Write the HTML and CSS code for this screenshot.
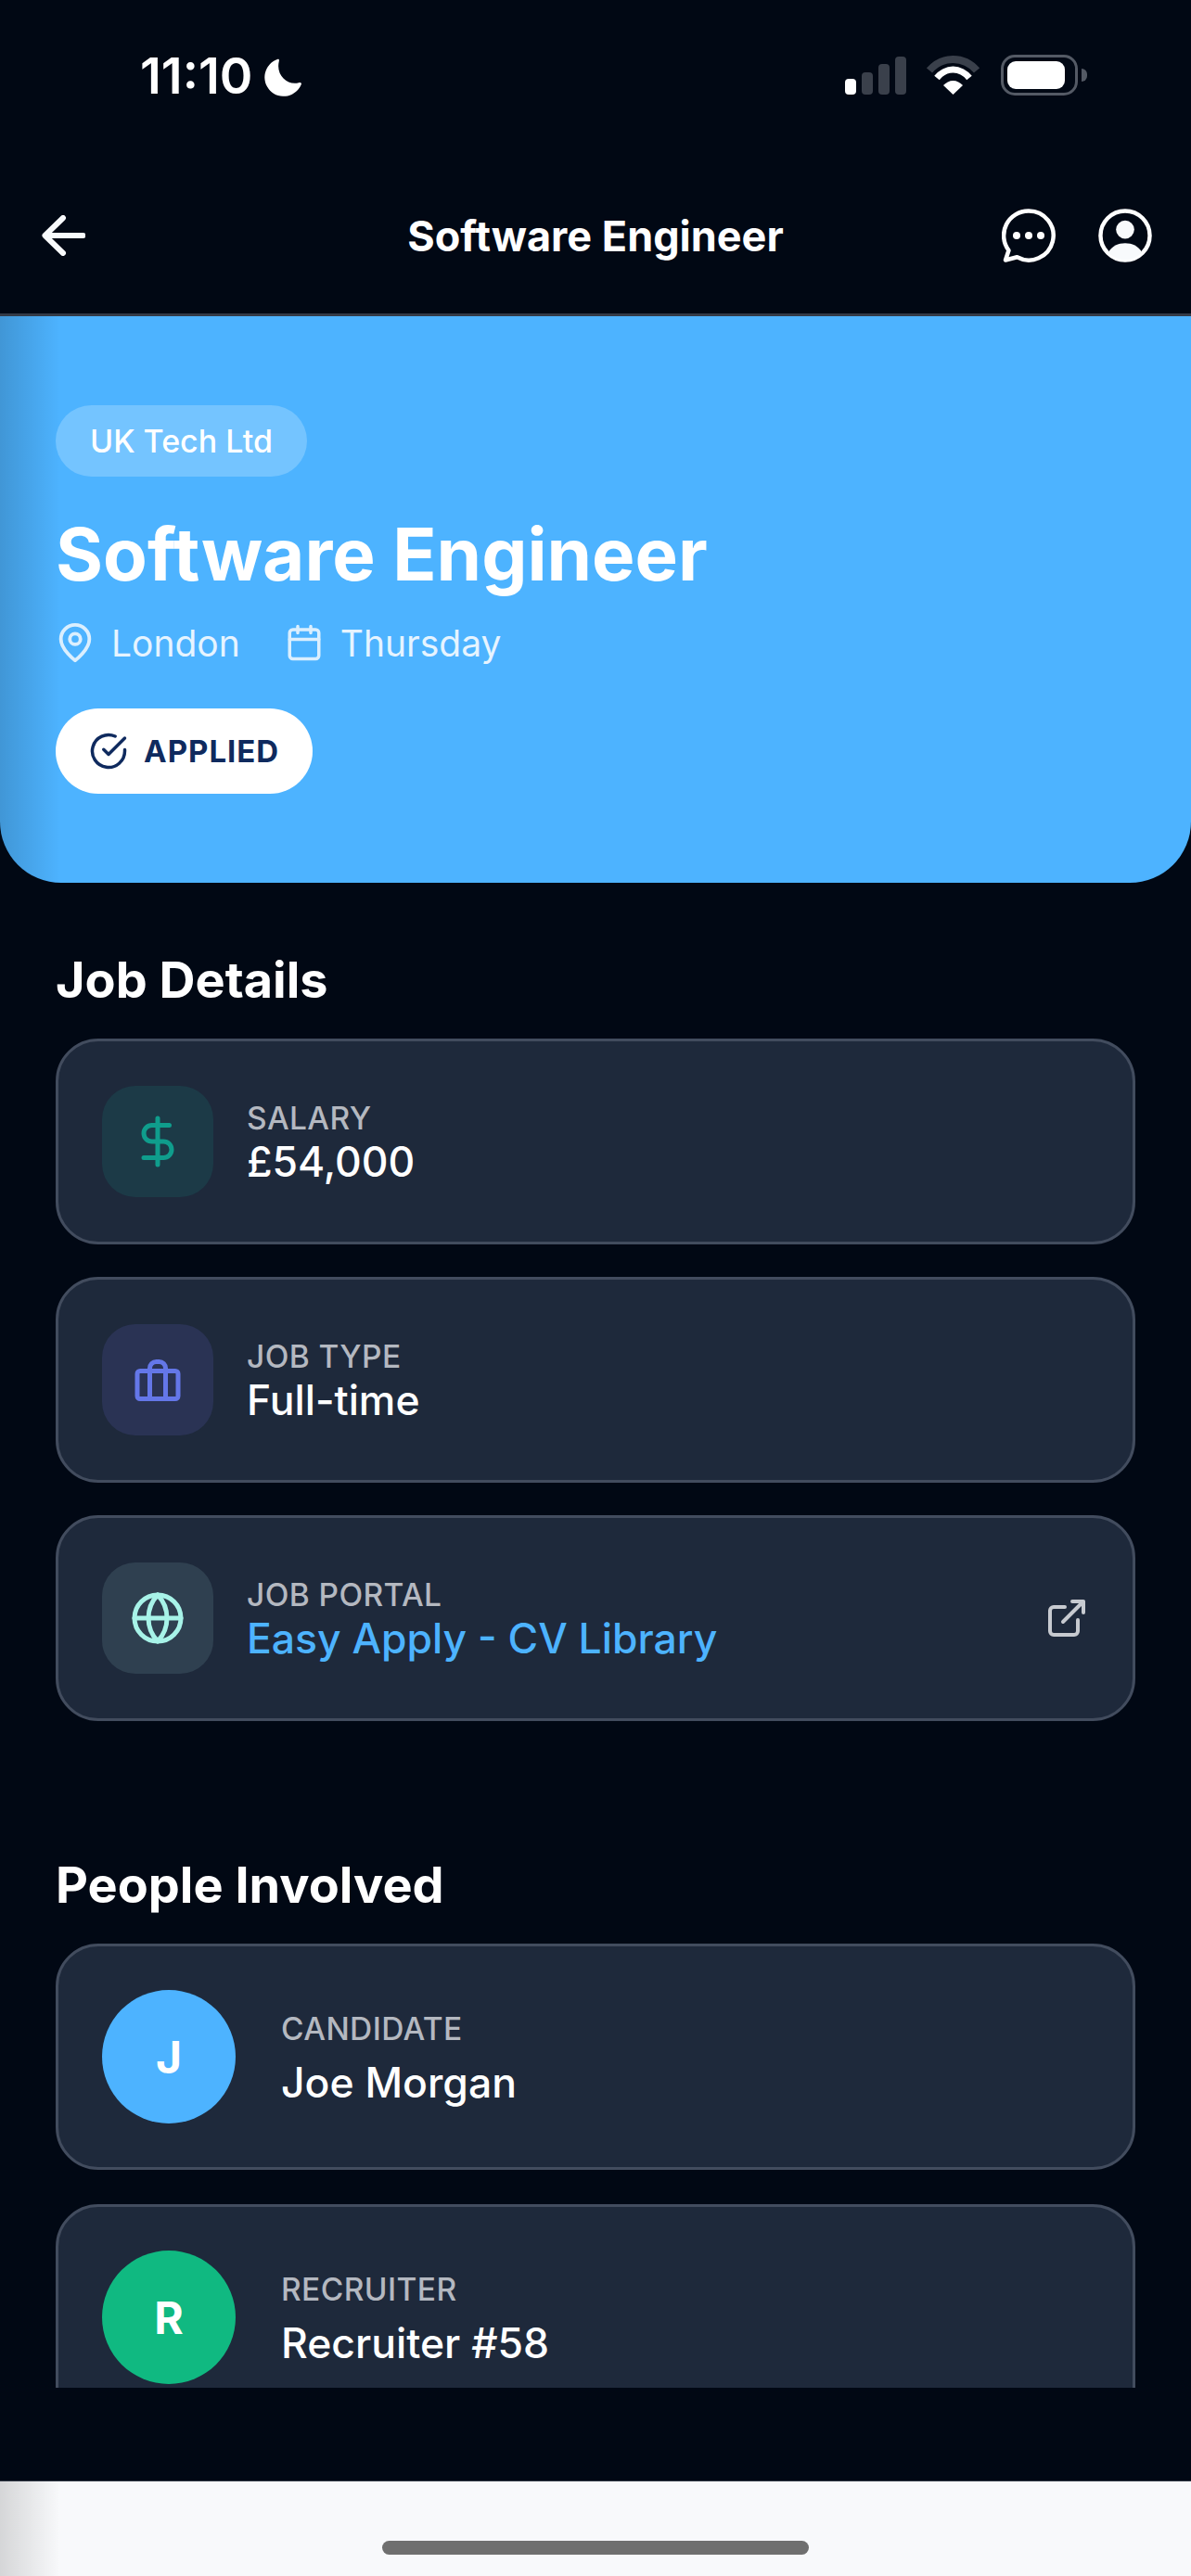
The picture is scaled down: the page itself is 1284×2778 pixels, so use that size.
FILE: index.html
```html
<!DOCTYPE html>
<html>
<head>
  <title>Software Engineer</title>
  <link rel="stylesheet" href="styles.css">
</head>
<body>
  <div class="app">
    <div class="status-bar">
      <div class="status-time">
        <span>11:10</span>
        <svg class="moon" viewBox="0 0 42 42"><path d="M15 1A20.500 20.500 0 1 0 41 27.500C40.500 26 39.500 25.800 38 26.300 26 29.500 13 18 16.800 3 17.200 1 16.500 .5 15 1z" fill="#fff"/></svg>
      </div>
      <div class="status-icons">
        <div class="signal">
          <span class="bar bar-on bar-1"></span>
          <span class="bar bar-2"></span>
          <span class="bar bar-3"></span>
          <span class="bar bar-4"></span>
        </div>
        <svg class="wifi" viewBox="0 0 57 42">
          <path d="M3 16C9 9 18 4 28.500 4S48 9 54 16" fill="none" stroke="#3a404b" stroke-width="8"/>
          <path d="M11 24c4-5 11-9 17.500-9S42 19 46 24" fill="none" stroke="#fff" stroke-width="7"/>
          <path d="M18 32c3-3 6.500-5 10.500-5s7.500 2 10.500 5L28.500 42z" fill="#fff"/>
        </svg>
        <div class="battery">
          <div class="battery-fill"></div>
        </div>
        <span class="battery-nub"></span>
      </div>
    </div>

    <header class="top-bar">
      <svg class="back-icon" viewBox="0 0 47 44"><path d="M23 3 3.500 22 23 41M4 22h40.500" fill="none" stroke="#f8fafc" stroke-width="6" stroke-linecap="round" stroke-linejoin="round"/></svg>
      <h1 class="top-title">Software Engineer</h1>
      <div class="top-actions">
        <svg class="top-icon" viewBox="0 0 58 58">
          <path d="M29 2.500a26.500 26.500 0 1 1-12.500 49.800L4 55.500l3.500-10.500A26.500 26.500 0 0 1 29 2.500z" fill="none" stroke="#fff" stroke-width="4.500" stroke-linejoin="round"/>
          <circle cx="16" cy="29" r="4" fill="#fff"/>
          <circle cx="29" cy="29" r="4" fill="#fff"/>
          <circle cx="42" cy="29" r="4" fill="#fff"/>
        </svg>
        <svg class="top-icon" viewBox="0 0 59 59">
          <circle cx="29.500" cy="29.500" r="27" fill="none" stroke="#fff" stroke-width="4.500"/>
          <circle cx="29.500" cy="23" r="10" fill="#f8fafc"/>
          <path d="M11 48c4-7 11-10 18.500-10S44 41 48 48c-5 5-11 8-18.500 8S16 53 11 48z" fill="#f8fafc"/>
        </svg>
      </div>
    </header>

    <main class="content">
      <section class="hero">
        <span class="company-chip">UK Tech Ltd</span>
        <h2 class="hero-title">Software Engineer</h2>
        <div class="hero-meta">
          <div class="meta-item">
            <svg class="meta-icon meta-pin" viewBox="0 0 24 24"><path d="M20 10c0 6-8 12-8 12s-8-6-8-12a8 8 0 0 1 16 0z"/><circle cx="12" cy="10" r="3"/></svg>
            <span>London</span>
          </div>
          <div class="meta-item">
            <svg class="meta-icon" viewBox="0 0 24 24"><rect x="3" y="4" width="18" height="18" rx="2"/><path d="M16 2v4M8 2v4M3 10h18"/></svg>
            <span>Thursday</span>
          </div>
        </div>
        <div class="status-pill">
          <svg class="pill-icon" viewBox="0 0 24 24"><path d="M22 11.080V12a10 10 0 1 1-5.930-9.140"/><path d="M22 4 12 14.010l-3-3"/></svg>
          <span>APPLIED</span>
        </div>
      </section>

      <section class="section">
        <h3 class="section-title">Job Details</h3>
        <div class="card-list">
          <div class="card">
            <div class="card-icon icon-green">
              <svg viewBox="0 0 24 24"><path d="M12 2v20M17 5H9.500a3.500 3.500 0 0 0 0 7h5a3.500 3.500 0 0 1 0 7H6"/></svg>
            </div>
            <div class="card-text">
              <div class="card-label">SALARY</div>
              <div class="card-value">£54,000</div>
            </div>
          </div>
          <div class="card">
            <div class="card-icon icon-indigo">
              <svg viewBox="0 0 24 24"><rect x="3.200" y="8.200" width="17.600" height="12" rx="1.200"/><path d="M15.400 20V7a2.800 2.800 0 0 0-2.800-2.800h-1.200A2.800 2.800 0 0 0 8.600 7v13"/></svg>
            </div>
            <div class="card-text">
              <div class="card-label">JOB TYPE</div>
              <div class="card-value">Full-time</div>
            </div>
          </div>
          <div class="card">
            <div class="card-icon icon-mint">
              <svg viewBox="0 0 24 24"><circle cx="12" cy="12" r="10"/><path d="M12 2a14.500 14.500 0 0 0 0 20 14.500 14.500 0 0 0 0-20M2 12h20"/></svg>
            </div>
            <div class="card-text">
              <div class="card-label">JOB PORTAL</div>
              <div class="card-value card-link">Easy Apply - CV Library</div>
            </div>
            <svg class="external-icon" viewBox="0 0 24 24"><path d="M18 13v6a2 2 0 0 1-2 2H5a2 2 0 0 1-2-2V8a2 2 0 0 1 2-2h6M15 3h6v6M10 14 21 3"/></svg>
          </div>
        </div>
      </section>

      <section class="section section-people">
        <h3 class="section-title">People Involved</h3>
        <div class="card-list people-list">
          <div class="card person-card">
            <div class="avatar avatar-blue">J</div>
            <div class="card-text">
              <div class="card-label">CANDIDATE</div>
              <div class="card-value person-name">Joe Morgan</div>
            </div>
          </div>
          <div class="card person-card">
            <div class="avatar avatar-green">R</div>
            <div class="card-text">
              <div class="card-label">RECRUITER</div>
              <div class="card-value person-name">Recruiter #58</div>
            </div>
          </div>
        </div>
      </section>
    </main>

    <footer class="home-area">
      <div class="home-bar"></div>
    </footer>
  </div>
</body>
</html>
```

FILE: styles.css
```css
/* page frame */
* {
  box-sizing: border-box;
}

html, body {
  margin: 0;
  padding: 0;
  background-color: #010814;
}

body {
  width: 1284px;
  height: 2778px;
  overflow: hidden;
  font-family: Inter, "Noto Sans", sans-serif;
  color: #fff;
}

.app {
  height: 2778px;
  display: flex;
  flex-direction: column;
}

/* status bar */
.status-bar {
  height: 116px;
  padding: 59px 112px 0 151px;
  display: flex;
  justify-content: space-between;
  align-items: flex-start;
}

.status-time {
  display: flex;
  align-items: center;
  gap: 12px;
  font-size: 54px;
  font-weight: 600;
  line-height: 46px;
}

.moon {
  width: 42px;
  height: 42px;
  margin-top: 4px;
}

.status-icons {
  display: flex;
  align-items: center;
  height: 44px;
}

.signal {
  display: flex;
  align-items: flex-end;
  gap: 6px;
  height: 41px;
  margin-right: 22px;
}

.bar {
  width: 12px;
  border-radius: 4px;
  background-color: #3a404b;
}

.bar-on {
  background-color: #fff;
}

.bar-1 {
  height: 17px;
}

.bar-2 {
  height: 24px;
}

.bar-3 {
  height: 33px;
}

.bar-4 {
  height: 41px;
}

.wifi {
  width: 57px;
  height: 42px;
  margin-right: 23px;
}

.battery {
  width: 83px;
  height: 44px;
  padding: 4px;
  border: 3px solid #545a65;
  border-radius: 15px;
}

.battery-fill {
  width: 62px;
  height: 30px;
  background-color: #fff;
  border-radius: 9px;
}

.battery-nub {
  width: 6px;
  height: 14px;
  margin-left: 4px;
  background-color: #545a65;
  border-radius: 0 7px 7px 0;
}

/* top bar */
.top-bar {
  height: 225px;
  padding: 110px 42px 0 45px;
  display: flex;
  justify-content: space-between;
  align-items: flex-start;
  position: relative;
  border-bottom: 3px solid #333a47;
}

.back-icon {
  width: 47px;
  height: 44px;
  margin-top: 6px;
}

.top-title {
  margin: 0;
  position: absolute;
  left: 0;
  right: 0;
  top: 112px;
  text-align: center;
  font-size: 45px;
  font-weight: 700;
  line-height: 54px;
}

.top-actions {
  display: flex;
  gap: 46px;
  margin-top: -1px;
}

.top-icon {
  width: 58px;
  height: 58px;
}

/* scrolling part */
.content {
  height: 2234px;
  flex: none;
  overflow: hidden;
}

.hero {
  height: 611px;
  padding: 96px 60px 0;
  background-color: #4db3ff;
  background-image: linear-gradient(90deg, rgba(0, 0, 0, 0.16), rgba(0, 0, 0, 0) 65px);
  border-radius: 0 0 66px 66px;
}

.company-chip {
  display: inline-block;
  height: 77px;
  padding: 0 37px 0 37px;
  line-height: 77px;
  font-size: 34px;
  font-weight: 500;
  background-color: #74c4ff;
  border-radius: 39px;
  vertical-align: top;
}

.hero-title {
  margin: 38px 0 0;
  font-size: 78px;
  font-weight: 700;
  line-height: 92px;
}

.hero-meta {
  display: flex;
  gap: 48px;
  margin-top: 26px;
  height: 46px;
  align-items: center;
  color: #e6f4ff;
  font-size: 39px;
}

.meta-item {
  display: flex;
  align-items: center;
  gap: 18px;
}

.meta-icon {
  width: 42px;
  height: 42px;
  fill: none;
  stroke: #dbeffe;
  stroke-width: 2;
  stroke-linecap: round;
  stroke-linejoin: round;
}

.meta-pin {
  width: 46px;
  height: 46px;
  margin: 0 -2px;
}

.status-pill {
  display: inline-flex;
  align-items: center;
  gap: 17px;
  height: 92px;
  margin-top: 48px;
  padding: 0 36px;
  background-color: #fff;
  border-radius: 46px;
  color: #0f2a5e;
  font-size: 33px;
  font-weight: 700;
  letter-spacing: 1px;
}

.pill-icon {
  width: 42px;
  height: 42px;
  fill: none;
  stroke: #0f2a5e;
  stroke-width: 2;
  stroke-linecap: round;
  stroke-linejoin: round;
}

/* sections */
.section {
  padding: 0 60px;
}

.section-title {
  margin: 0;
  padding-top: 73px;
  height: 168px;
  font-size: 54px;
  font-weight: 700;
  line-height: 64px;
}

.section-people {
  margin-top: 72px;
}

.card-list {
  display: flex;
  flex-direction: column;
  gap: 35px;
}

.people-list {
  gap: 37px;
}

.card {
  display: flex;
  align-items: center;
  height: 222px;
  padding: 0 47px;
  background-color: #1e293b;
  border: 3px solid #424c5e;
  border-radius: 46px;
  flex: none;
}

.person-card {
  height: 244px;
}

.card-icon {
  width: 120px;
  height: 120px;
  margin-right: 36px;
  border-radius: 36px;
  display: flex;
  align-items: center;
  justify-content: center;
  flex: none;
}

.card-icon svg {
  width: 60px;
  height: 60px;
  fill: none;
  stroke: currentColor;
  stroke-width: 2;
  stroke-linecap: round;
  stroke-linejoin: round;
}

.icon-green {
  background-color: #1c3a47;
  color: #0f9d8c;
}

.icon-indigo {
  background-color: #2a3354;
  color: #6477e8;
}

.icon-mint {
  background-color: #2f4050;
  color: #a7f3e8;
}

.card-text {
  flex: 1;
  padding-top: 3px;
}

.card-label {
  font-size: 33.500px;
  font-weight: 500;
  line-height: 38px;
  letter-spacing: 0.400px;
  color: #b4b8c0;
}

.card-value {
  margin-top: 3px;
  font-size: 44.500px;
  font-weight: 500;
  line-height: 50px;
  color: #fff;
}

.card-link {
  color: #4db3ff;
}

.external-icon {
  width: 48px;
  height: 48px;
  flex: none;
  fill: none;
  stroke: #c7cad0;
  stroke-width: 2;
  stroke-linecap: round;
  stroke-linejoin: round;
}

.avatar {
  width: 144px;
  height: 144px;
  margin-right: 49px;
  border-radius: 50%;
  display: flex;
  align-items: center;
  justify-content: center;
  flex: none;
  font-size: 48px;
  font-weight: 700;
}

.avatar-blue {
  background-color: #4db3ff;
}

.avatar-green {
  background-color: #10b981;
}

.person-name {
  margin-top: 14px;
}

/* home indicator */
.home-area {
  margin-top: 100px;
  height: 103px;
  flex: none;
  padding-top: 64px;
  background-color: #f8f9fb;
  background-image: linear-gradient(90deg, rgba(0, 0, 0, 0.14), rgba(0, 0, 0, 0) 65px);
  border-top: 1px solid #333a47;
}

.home-bar {
  width: 460px;
  height: 15px;
  margin: 0 auto;
  background-color: #6f6f6f;
  border-radius: 8px;
}
```
